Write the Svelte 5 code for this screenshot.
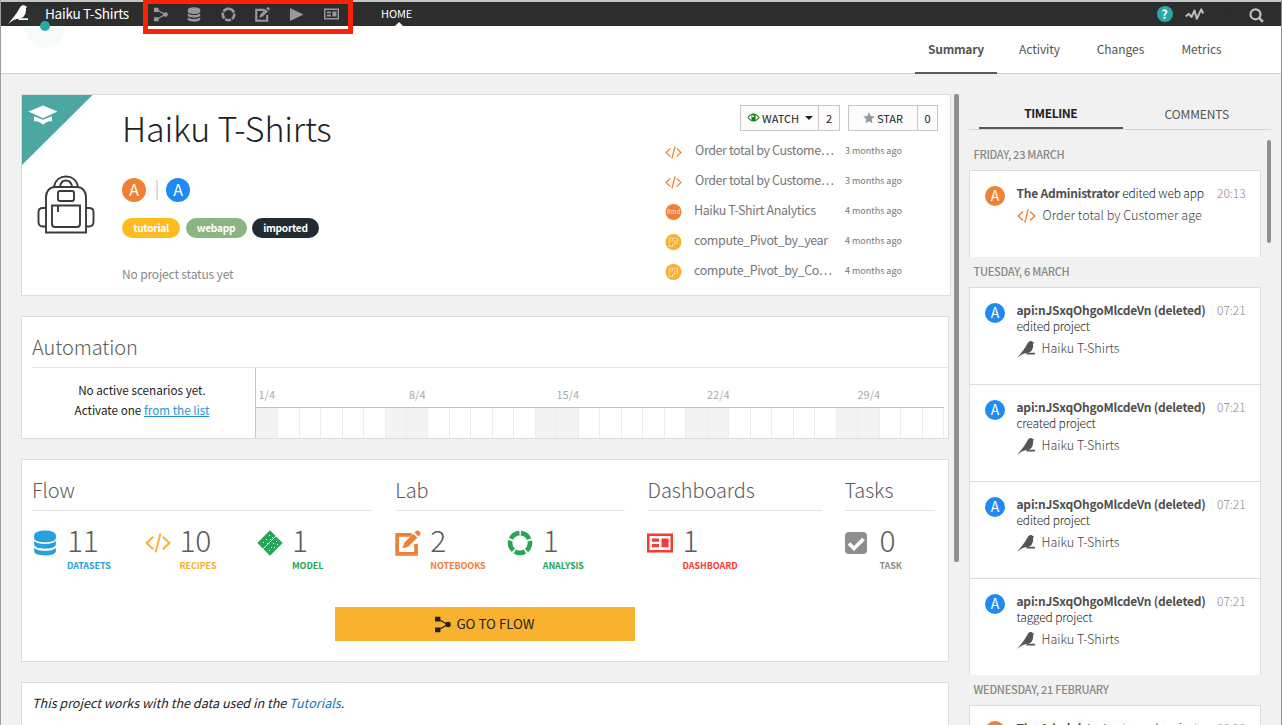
<script>
  const tabs = ['Summary', 'Activity', 'Changes', 'Metrics'];
  const navIcons = ['flow', 'database', 'ring', 'edit', 'play', 'board'];
  const tags = [
    { name: 'tutorial', color: '#ffbb1f', width: 58 },
    { name: 'webapp', color: '#8ab583', width: 61 },
    { name: 'imported', color: '#212b31', width: 67 }
  ];
  const recent = [
    { icon: 'code', name: 'Order total by Custome…', when: '3 months ago' },
    { icon: 'code', name: 'Order total by Custome…', when: '3 months ago' },
    { icon: 'rmd', name: 'Haiku T-Shirt Analytics', when: '4 months ago' },
    { icon: 'pivot', name: 'compute_Pivot_by_year', when: '4 months ago' },
    { icon: 'pivot', name: 'compute_Pivot_by_Co…', when: '4 months ago' }
  ];
  const days = Array.from({ length: 32 }, (_, i) => ({
    weekend: i % 7 === 0 || i % 7 === 6,
    label: i % 7 === 0 ? `${i + 1}/4` : ''
  }));
  const groups = [
    { title: 'Flow', width: 341, items: [
      { icon: 'database', n: 11, label: 'DATASETS', color: '#28a0dc' },
      { icon: 'code', n: 10, label: 'RECIPES', color: '#f8b030' },
      { icon: 'model', n: 1, label: 'MODEL', color: '#27a655' }
    ] },
    { title: 'Lab', width: 230, items: [
      { icon: 'edit', n: 2, label: 'NOTEBOOKS', color: '#f28034' },
      { icon: 'ring', n: 1, label: 'ANALYSIS', color: '#27a655' }
    ] },
    { title: 'Dashboards', width: 174.5, items: [
      { icon: 'board', n: 1, label: 'DASHBOARD', color: '#f73a32' }
    ] },
    { title: 'Tasks', width: 91, items: [
      { icon: 'check', n: 0, label: 'TASK', color: '#8e8e8e' }
    ] }
  ];
  const apiUser = 'api:nJSxqOhgoMlcdeVn (deleted)';
  const timeline = [
    { day: 'FRIDAY, 23 MARCH', events: [
      { who: 'The Administrator', what: 'edited web app', at: '20:13', icon: 'code', target: 'Order total by Customer age', admin: true }
    ] },
    { day: 'TUESDAY, 6 MARCH', events: ['edited', 'created', 'edited', 'tagged'].map((v) => (
      { who: apiUser, what: `${v} project`, at: '07:21', icon: 'bird', target: 'Haiku T-Shirts', admin: false }
    )) },
    { day: 'WEDNESDAY, 21 FEBRUARY', events: [
      { who: 'The Administrator', what: 'tagged project', at: '09:20', icon: 'bird', target: 'Haiku T-Shirts', admin: true }
    ] }
  ];
</script>

{#snippet icon(name, w, h = w)}
  {#if name === 'flow'}
    <svg width={w} height={h} viewBox="0 0 16 16" fill="currentColor"><path d="M1 .8h5v4.4H1zM1 10.8h5v4.4H1z"/><circle cx="13.3" cy="8" r="2.5"/><path d="M4 3l9 5-9 5" fill="none" stroke="currentColor" stroke-width="1.2"/></svg>
  {:else if name === 'database'}
    <svg width={w} height={h} viewBox="0 0 24 28" fill="currentColor"><ellipse cx="12" cy="5.5" rx="11.7" ry="5"/><path d="M.3 5.5v3C.3 14.800 23.700 14.800 23.700 8.500v-3zM.3 11.600c3 4.500 20.400 4.500 23.400 0v4c0 6-23.400 6-23.400 0zM.3 19c3 4.500 20.400 4.500 23.400 0v4c0 6-23.400 6-23.400 0z"/></svg>
  {:else if name === 'ring'}
    <svg width={w} height={h} viewBox="0 0 28 28" fill="none"><circle cx="14" cy="14" r="10.700" stroke="currentColor" stroke-width="5" stroke-dasharray="11.45 2" transform="rotate(-85 14 14)"/></svg>
  {:else if name === 'edit'}
    <svg width={w} height={h} viewBox="0 0 28 28"><path d="M18 5.300H2.300v20.400h20.400V15" fill="none" stroke="currentColor" stroke-width="4"/><path d="M8 20l2.200-6.500L19.700 4l4.300 4.300-9.500 9.500zM21 2.700l1.300-1.300c2.800-2.600 6.900 1.500 4.300 4.300L25.300 7z" fill="currentColor"/></svg>
  {:else if name === 'play'}
    <svg width={w} height={h} viewBox="0 0 16 16" fill="currentColor"><path d="M1 1l14.500 7L1 15z"/></svg>
  {:else if name === 'board'}
    <svg width={w} height={h} viewBox="0 0 26 20"><path d="M1.250 1.800h23.500v16.400H1.250z" fill="none" stroke="currentColor" stroke-width="2.500"/><path d="M5 5.500h7v3.200H5zM5 11h7v3.200H5zM14.500 5.500h7v8.700h-7z" fill="currentColor"/></svg>
  {:else if name === 'code'}
    <svg width={w} height={h} viewBox="0 0 27 20" fill="none" stroke="currentColor" stroke-width="2"><path d="M8.500 3.500L1.700 10l6.800 6.500M18.500 3.500l6.800 6.500-6.800 6.500M16 .5L11 19.500"/></svg>
  {:else if name === 'model'}
    <svg width={w} height={h} viewBox="0 0 26 26"><path d="M13 .3L25.700 13 13 25.700.3 13z" fill="currentColor"/><path d="M6 19L19 6" stroke="#fff" stroke-width=".8"/><path d="M12 5h1v1h-1zM9 9h1v1H9zM13 9h1v1h-1zM6 12h1v1H6zM10 13h1v1h-1zM15 7h1v1h-1zM19 11h1v1h-1zM16 13h1v1h-1zM20 14h1v1h-1zM14 17h1v1h-1zM17 17h1v1h-1zM12 20h1v1h-1z" fill="#fff"/></svg>
  {:else if name === 'check'}
    <svg width={w} height={h} viewBox="0 0 24 24"><rect x="1" y="1" width="22" height="22" rx="4" fill="currentColor"/><path d="M5 12.500l5 5L19.500 8" fill="none" stroke="#fff" stroke-width="3.600"/></svg>
  {:else if name === 'rmd'}
    <svg width={w} height={h} viewBox="0 0 16 16"><circle cx="8" cy="8" r="8" fill="#f28034"/><text x="8" y="10.300" text-anchor="middle" font-size="6.300" fill="#fff" fill-opacity=".85">Rmd</text></svg>
  {:else if name === 'pivot'}
    <svg width={w} height={h} viewBox="0 0 16 16"><circle cx="8" cy="8" r="8" fill="#f8b030"/><path d="M3.700 4.200h8.300v2.800H9.300v3L7 11.700M12 7v2.500H9.300M7 10.200v2.600M3.700 4.200v8.300H7M3.700 7h3.300V4.200" fill="none" stroke="#fff" stroke-opacity=".75" stroke-width=".7"/></svg>
  {:else if name === 'bird'}
    <svg width={w} height={h} viewBox="0 0 20 19" fill="currentColor"><path d="M0 19L6.300 11.300C9 8 10.800 4.400 12.200 2c1.200-2 4-2.500 5.400-1l1.600 1-1.300 1c.4 4.200-.7 7.500-3.300 9.400-3.100 2-6.600.8-9.800 3z"/><path d="M11.300 13.200H20V15h-9.800z"/></svg>
  {/if}
{/snippet}

<div class="page">
  <header class="topbar">
    <span class="logo">{@render icon('bird', 20, 19)}</span>
    <span class="project">Haiku T-Shirts</span>
    <nav class="icons">
      {#each navIcons as name}
        <span>{@render icon(name, name === 'database' ? 14 : 15, name === 'board' ? 12 : 15)}</span>
      {/each}
    </nav>
    <span class="home">HOME</span>
    <span class="tools">
      <span class="help">?</span>
      <svg class="pulse" width="19" height="14" viewBox="0 0 19 14" fill="none" stroke="#bdbdbd" stroke-width="2" stroke-linejoin="round"><path d="M.8 9.500l3-2.700L6.500 10l3-6.500 2.300 8.300 4.400-9.500 2 4.200"/></svg>
      <svg class="ghost" width="14" height="14" viewBox="0 0 14 14" fill="none" stroke="#233133" stroke-width="1.500"><path d="M1 13l5-6 1-4 4-1 1 3-3 3-4 1"/></svg>
      <svg class="search" width="15" height="15" viewBox="0 0 15 15" fill="none" stroke="#c0c0c0" stroke-width="2.200"><circle cx="6.500" cy="6.300" r="5"/><path d="M10.300 10.200l3.600 3.600" stroke-width="2.600"/></svg>
    </span>
    <i class="halo"></i><i class="dot"></i><i class="highlight"></i>
  </header>

  <nav class="tabs">
    {#each tabs as t, i}<span class:active={i === 0}>{t}</span>{/each}
  </nav>

  <div class="body">
    <main>
      <section class="card summary">
        <svg class="ribbon" width="71" height="70" viewBox="0 0 71 70"><path d="M0 0h70.500L0 70z" fill="#4ca7a3"/><path d="M21 10.500l14.500 6L21 23.200l-14.500-6.700zM12 21.300l9 3.500 9-3.500v5.200c-2.500-1-6 .2-9 3.200-3-3-6.500-4.200-9-3.200z" fill="#fff"/></svg>
        <div class="picture">
          <svg width="58" height="60" viewBox="0 0 58 60" fill="none" stroke="#3b3b3b" stroke-width="1.900"><path d="M9 57.500V22c0-6 4-10 9-10h22c5 0 9 4 9 10v35.500zM17 12C18 5 23 1.500 29 1.500S40 5 41 12M23 11c1-4 4-5.500 6-5.500s5 1.500 6 5.500M9 33H6c-3 0-4.500 1.500-4.500 4v10c0 3 1.500 4.500 4.500 4.500h3M49 33h3c3 0 4.500 1.500 4.500 4v10c0 3-1.500 4.500-4.500 4.500h-3M15 30.500h28V49c0 2-1 3-3 3H18c-2 0-3-1-3-3z"/><rect x="21" y="16" width="16" height="10" rx="2"/><path d="M21 31v6"/></svg>
        </div>
        <div class="identity">
          <h1>Haiku T-Shirts</h1>
          <div class="people"><b class="avatar admin">A</b><i></i><b class="avatar">A</b></div>
          <div class="tags">
            {#each tags as t}<span style="background:{t.color};width:{t.width}px">{t.name}</span>{/each}
          </div>
          <p>No project status yet</p>
        </div>
        <aside>
          <div class="buttons">
            <div class="btn watch">
              <span><svg width="13" height="9" viewBox="0 0 13 9"><path d="M.3 4.500Q6.500-3.500 12.700 4.500 6.500 12.500.3 4.500z" fill="#128012"/><path d="M1.700 4.500Q3 2.600 4.500 2v5Q3 6.400 1.700 4.500zM11.300 4.500Q10 2.600 8.500 2v5q1.500-.6 2.800-2.500z" fill="#fff"/><circle cx="6" cy="3.200" r="1" fill="#fff"/></svg>WATCH<svg class="caret" width="8" height="4" viewBox="0 0 8 4"><path d="M0 0h8L4 4z" fill="#222"/></svg></span><span>2</span>
            </div>
            <div class="btn star">
              <span><svg width="12" height="12" viewBox="0 0 12 12"><path d="M6 .3l1.700 3.800 4.100.4-3.100 2.800.9 4.100L6 9.300l-3.600 2.100.9-4.100L.2 4.500l4.100-.4z" fill="#999"/></svg>STAR</span><span>0</span>
            </div>
          </div>
          {#each recent as r}
            <div class="recent">
              <span class="ic {r.icon}">{@render icon(r.icon, 17, r.icon === 'code' ? 13 : 16)}</span>
              <span class="nm {r.icon}">{r.name}</span>
              <time>{r.when}</time>
            </div>
          {/each}
        </aside>
      </section>

      <section class="card automation">
        <h2>Automation</h2>
        <div class="schedule">
          <div class="note">No active scenarios yet.<br />Activate one <a href="#list">from the list</a></div>
          <div class="calendar">
            <div class="labels">{#each days as d}<span>{d.label}</span>{/each}</div>
            <div class="cells">{#each days as d}<span class:weekend={d.weekend}></span>{/each}</div>
          </div>
        </div>
      </section>

      <section class="card counts">
        <div class="groups">
          {#each groups as g}
            <div class="group" style="width:{g.width}px">
              <h2>{g.title}</h2>
              <div class="items">
                {#each g.items as it}
                  <div class="item" style="color:{it.color}">
                    <span class="ic">{@render icon(it.icon, it.icon === 'database' || it.icon === 'check' ? 24 : 26, it.icon === 'board' || it.icon === 'code' ? 20 : it.icon === 'check' ? 24 : 26)}</span>
                    <span class="num">{it.n}</span>
                    <span class="lbl">{it.label}</span>
                  </div>
                {/each}
              </div>
            </div>
          {/each}
        </div>
        <button>{@render icon('flow', 17)}<span>GO TO FLOW</span></button>
      </section>

      <section class="card about">This project works with the data used in the <a href="#tutorials">Tutorials</a>.</section>
    </main>

    <i class="scroll main-scroll"></i>

    <div class="side">
      <nav><span class="active">TIMELINE</span><span>COMMENTS</span></nav>
      <div class="feed">
        <div class="list">
          {#each timeline as group}
            <h3>{group.day}</h3>
            <div class="events">
              {#each group.events as e}
                <article class:short={e.icon === 'code'}>
                  <b class="avatar small" class:admin={e.admin}>A</b>
                  <div class="text">
                    <div class="line"><div class="who"><strong>{e.who}</strong> <span>{e.what}</span></div><time>{e.at}</time></div>
                    <div class="target {e.icon}">{@render icon(e.icon, e.icon === 'code' ? 19 : 18, e.icon === 'code' ? 14 : 17)}<span>{e.target}</span></div>
                  </div>
                </article>
              {/each}
            </div>
          {/each}
        </div>
        <i class="scroll"></i>
      </div>
    </div>
  </div>
</div>

<style>
  :global(body) { margin: 0; overflow: hidden; }
  * { box-sizing: border-box; }
  svg { display: block; flex: none; }
  i { font-style: normal; }
  h1, h2, h3, p { margin: 0; font-weight: 300; }
  .page { width: 1282px; height: 725px; overflow: hidden; display: flex; flex-direction: column; background: #f1f1f1; border-left: 1px solid #a09c98; border-right: 1px solid #8b8e8e; font-family: "Noto Sans CJK SC", "Noto Sans", sans-serif; font-size: 12.5px; color: #222; position: relative; white-space: nowrap; }
  .topbar { height: 26px; flex: none; border-top: 2px solid #c4c6c6; background: #2d2d2d; display: flex; align-items: center; position: relative; z-index: 1; }
  .logo { width: 20px; margin-left: 7px; color: #fff; }
  .project { color: #fff; font-size: 13.6px; letter-spacing: -.3px; line-height: 22px; margin-left: 17px; width: 108px; margin-top: -2px; }
  .icons { display: flex; color: #999; }
  .icons span { width: 34px; height: 22px; display: flex; align-items: center; }
  .icons span:last-child { padding-left: .5px; }
  .home { color: #fff; font-size: 11px; line-height: 22px; margin: -2px 0 0 24px; letter-spacing: -.1px; position: relative; }
  .home::after { content: ""; position: absolute; left: 13px; top: 20px; border: 5px solid transparent; border-top: 0; border-bottom: 5px solid #fff; }
  .tools { margin-left: auto; display: flex; align-items: center; margin-right: 17.5px; }
  .help { width: 16px; height: 16px; border-radius: 50%; background: #29a8a4; color: #fff; font-weight: 700; font-size: 12px; line-height: 15px; text-align: center; }
  .pulse { margin-left: 12px; }
  .ghost { margin-left: 14px; }
  .search { margin-left: 17px; margin-top: 3px; }
  .halo { position: absolute; left: 24px; top: 4px; width: 40px; height: 42px; border-radius: 50%; background: rgba(38,170,165,.045); }
  .dot { position: absolute; left: 39px; top: 19px; width: 10px; height: 10px; border-radius: 50%; background: #29a8a4; }
  .highlight { position: absolute; left: 142px; top: -3px; width: 210px; height: 35px; border: 5px solid #fb2305; }
  .tabs { height: 48px; flex: none; background: #fff; border-bottom: 1px solid #d0d0d0; display: flex; justify-content: flex-end; padding-right: 39px; color: #555; font-size: 12px; line-height: 46px; letter-spacing: -.05px; }
  .tabs span { height: 48px; width: 81px; text-align: center; }
  .tabs span.active { width: 82px; font-weight: 700; letter-spacing: -.25px; border-bottom: 2px solid #5a5a5a; }
  .tabs span.active + span { margin-left: 2px; }
  .body { flex: 1; min-height: 0; display: flex; align-items: flex-start; padding: 20px 0 0 20px; }
  main { width: 930px; flex: none; display: flex; flex-direction: column; gap: 20px; }
  .card { background: #fff; border: 1px solid #dcdcdc; width: 928px; }
  .summary { height: 202px; width: 930px; display: flex; position: relative; }
  .ribbon { position: absolute; left: 0; top: 0; }
  .picture { width: 100px; padding: 80px 0 0 15px; }
  .identity { width: 543px; }
  h1 { font-size: 34px; letter-spacing: -.15px; line-height: 44px; margin-top: 11px; height: 44px; }
  .people { display: flex; align-items: center; margin-top: 28px; height: 24px; }
  .people i { width: 2px; height: 20px; background: #ddd; margin: 0 9px 0 10px; }
  .people .avatar:last-child { margin-left: -1px; }
  .avatar { width: 24px; height: 24px; border-radius: 50%; background: #1f8af2; color: #fff; font-weight: 400; font-size: 16px; line-height: 22px; text-align: center; flex: none; }
  .avatar.admin { background: #f08033; }
  .avatar.small { width: 20px; height: 20px; font-size: 14px; line-height: 19px; }
  .tags { display: flex; gap: 5.500px; margin-top: 16px; }
  .tags span { height: 20px; border-radius: 10px; color: #fff; font-weight: 700; font-size: 10.200px; letter-spacing: -.3px; line-height: 19px; text-align: center; }
  .identity p { color: #888; font-size: 12px; letter-spacing: -.15px; line-height: 20px; margin-top: 26px; font-weight: 400; }
  .buttons { display: flex; gap: 8px; margin: 10px 0 5px 75px; }
  .btn { height: 26px; border: 1px solid #c6c6c6; background: #fcfcfc; display: flex; font-size: 11px; line-height: 22px; color: #222; }
  .btn span { display: flex; align-items: center; justify-content: center; padding-bottom: 1px; }
  .btn span:last-child { border-left: 1px solid #c6c6c6; flex: 1; }
  .watch { width: 100px; }
  .watch span:first-child { width: 77px; gap: 2px; padding-left: 1px; }
  .caret { margin-left: 4px; }
  .star { width: 90px; }
  .star span:first-child { width: 68px; gap: 2px; }
  .recent { height: 30px; display: flex; align-items: center; color: #777; }
  .recent .ic { width: 29px; color: #f28034; margin-top: 3px; }
  .recent .ic.pivot { margin-top: 1px; }
  .recent .ic.rmd { margin-top: 2px; }
  .recent .nm { width: 151px; font-size: 12.500px; letter-spacing: -.4px; line-height: 20px; margin-top: -3px; }
  .recent .nm.code { padding-left: 1px; }
  .recent time { font-size: 9px; line-height: 20px; }
  h2 { font-size: 20px; letter-spacing: -.08px; line-height: 28px; color: #5c5c5c; }
  .automation { height: 123px; padding-left: 10px; }
  .automation h2 { height: 51px; padding-top: 16px; border-bottom: 1px solid #e4e4e4; }
  .schedule { display: flex; height: 70px; }
  .note { width: 224px; border-right: 1px solid #c6c6c6; text-align: center; font-size: 11.700px; line-height: 20px; padding: 12px 3px 0 0; }
  a { color: #2a94d6; }
  .calendar { width: 688px; }
  .labels, .cells { display: flex; }
  .labels { height: 40px; border-bottom: 1px solid #c2c2c2; color: #aaa; font-size: 11px; line-height: 53px; }
  .labels span { width: 21.500px; display: flex; justify-content: center; }
  .cells { padding-left: .6px; background: linear-gradient(#f3f3f3, #f3f3f3) 0 0 / 1px 100% no-repeat; }
  .cells span { width: 21.500px; height: 30px; border-right: 1px solid #ededed; }
  .cells .weekend { background: #f3f3f3; }
  .counts { height: 203px; padding: 0 0 0 10px; display: flex; flex-direction: column; }
  .groups { display: flex; gap: 22.300px; height: 147px; }
  .group h2 { height: 51px; padding-top: 16px; border-bottom: 1px solid #e4e4e4; }
  .items { display: flex; }
  .item { width: 112.500px; display: grid; grid-template-columns: 35px 1fr; grid-template-rows: 47px 16px; }
  .item .ic { height: 64px; display: flex; align-items: center; padding-left: 1px; }
  .item:nth-child(n+2) .ic { padding-left: 0; }
  .group:nth-child(n+2) .item .ic { padding-left: 0; margin-left: -.5px; }
  .item .num { font-size: 30px; font-weight: 300; line-height: 38px; padding-top: 9px; color: #5c5c5c; letter-spacing: -.3px; }
  .item .lbl { grid-column: 2; font-size: 9px; letter-spacing: -.1px; font-weight: 700; line-height: 16px; }
  button { width: 300px; height: 34px; margin-left: 303px; border: 0; padding: 0 1px 0 0; background: #f8b230; color: #222; font: 400 13.300px/32px "Noto Sans CJK SC", sans-serif; display: flex; align-items: center; justify-content: center; gap: 5px; }
  .about { height: 80px; padding: 10px; font-style: italic; font-size: 12.580px; line-height: 20px; }
  .about a { text-decoration: none; color: #1176bb; }
  .scroll { width: 5px; background: #8f8f8f; border-radius: 2px; flex: none; }
  .main-scroll { height: 468px; margin-left: 3px; }
  .side { margin-left: 10px; width: 302px; }
  .side nav { display: flex; height: 36px; border-bottom: 1px solid #d6d6d6; padding-left: 10px; font-size: 12px; color: #555; letter-spacing: -.1px; }
  .side nav span { width: 149px; text-align: center; line-height: 39px; height: 35px; }
  .side nav .active { width: 144px; line-height: 37px; font-weight: 700; letter-spacing: -.4px; color: #222; border-bottom: 2px solid #5a5a5a; }
  .feed { display: flex; justify-content: space-between; }
  .feed .scroll { height: 103px; width: 4px; margin-top: 10px; }
  .list { width: 292px; padding-top: 10px; }
  h3 { font-size: 11px; letter-spacing: -.26px; line-height: 28px; height: 30px; padding-left: 4.500px; color: #888; font-weight: 500; }
  .events { background: #fff; border: 1px solid #dcdcdc; border-bottom: 0; }
  article { display: flex; height: 97px; padding: 15px 0 0 15px; border-bottom: 1px solid #dcdcdc; }
  article:last-child { border-bottom: 0; height: 96px; }
  article.short:last-child { height: 86px; }
  .text { margin: -1px 0 0 11.500px; font-size: 12px; line-height: 16px; color: #222; font-weight: 300; }
  .line { display: flex; }
  .who { width: 200.500px; white-space: normal; letter-spacing: -.15px; }
  .text strong { color: #4f4f4f; font-weight: 700; letter-spacing: -.22px; }
  .text time { color: #888; }
  .target { display: flex; align-items: center; height: 24px; color: #f28034; }
  .target.code { padding-top: 4px; height: 26px; }
  .target.bird { color: #555; padding-top: 3px; }
  .target.bird svg { margin-top: 3px; }
  .target span { margin-left: 7px; color: #444; font-size: 12.500px; }
  .target.code span { font-size: 12.650px; margin-top: -2px; }
</style>
